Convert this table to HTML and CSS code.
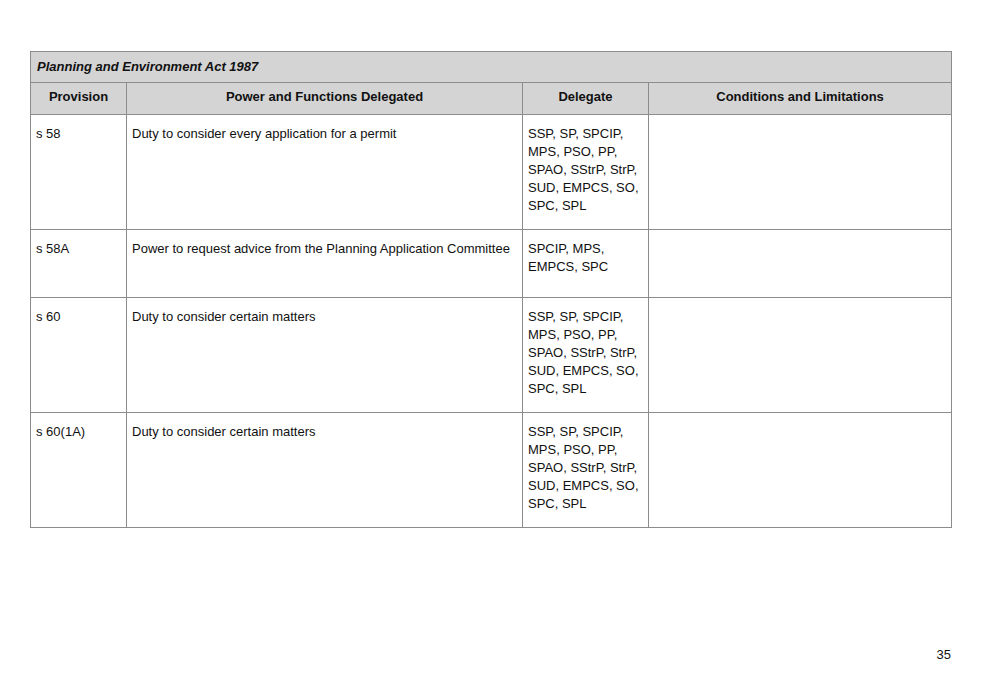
FILE: index.html
```html
<!DOCTYPE html>
<html>
<head>
<meta charset="utf-8">
<link rel="stylesheet" href="styles.css">
</head>
<body>
<div class="page">
  <table class="deleg">
    <colgroup>
      <col class="c1"><col class="c2"><col class="c3"><col class="c4">
    </colgroup>
    <thead>
      <tr class="title-row"><th colspan="4" class="title">Planning and Environment Act 1987</th></tr>
      <tr class="head-row">
        <th>Provision</th>
        <th>Power and Functions Delegated</th>
        <th>Delegate</th>
        <th>Conditions and Limitations</th>
      </tr>
    </thead>
    <tbody>
      <tr class="row-tall">
        <td>s 58</td>
        <td>Duty to consider every application for a permit</td>
        <td>SSP, SP, SPCIP, MPS, PSO, PP, SPAO, SStrP, StrP, SUD, EMPCS, SO, SPC, SPL</td>
        <td></td>
      </tr>
      <tr class="row-short">
        <td>s 58A</td>
        <td>Power to request advice from the Planning Application Committee</td>
        <td>SPCIP, MPS, EMPCS, SPC</td>
        <td></td>
      </tr>
      <tr class="row-tall">
        <td>s 60</td>
        <td>Duty to consider certain matters</td>
        <td>SSP, SP, SPCIP, MPS, PSO, PP, SPAO, SStrP, StrP, SUD, EMPCS, SO, SPC, SPL</td>
        <td></td>
      </tr>
      <tr class="row-tall">
        <td>s 60(1A)</td>
        <td>Duty to consider certain matters</td>
        <td>SSP, SP, SPCIP, MPS, PSO, PP, SPAO, SStrP, StrP, SUD, EMPCS, SO, SPC, SPL</td>
        <td></td>
      </tr>
    </tbody>
  </table>
  <div class="footer">35</div>
</div>
</body>
</html>
```

FILE: styles.css
```css
html, body {
  margin: 0;
  padding: 0;
  background: #ffffff;
}
body {
  font-family: "Liberation Sans", Arial, sans-serif;
  color: #111111;
  font-size: 13px;
}
.page {
  width: 981px;
  height: 694px;
  box-sizing: border-box;
  padding: 51px 30px 0 30px;
  display: flex;
  flex-direction: column;
}
.deleg {
  border-collapse: collapse;
  table-layout: fixed;
  width: 921px;
}
.c1 { width: 96px; }
.c2 { width: 396px; }
.c3 { width: 126px; }
.c4 { width: 303px; }
.deleg th, .deleg td {
  border: 1px solid #8c8c8c;
  padding: 0 5px;
  line-height: 18px;
  vertical-align: top;
  text-align: left;
}
.title-row th {
  background: #d4d4d4;
  height: 30px;
  vertical-align: middle;
  font-weight: bold;
  font-style: italic;
  font-size: 13px;
  padding-left: 6px;
}
.head-row th {
  background: #d4d4d4;
  height: 32px;
  vertical-align: middle;
  text-align: center;
  font-weight: bold;
  font-size: 13px;
  padding-bottom: 4px;
  box-sizing: border-box;
}
.deleg td {
  padding-top: 10px;
  box-sizing: border-box;
}
.row-tall td { height: 115px; }
.row-short td { height: 68px; }
.footer {
  margin-top: 119px;
  text-align: right;
  font-size: 13px;
}
```
